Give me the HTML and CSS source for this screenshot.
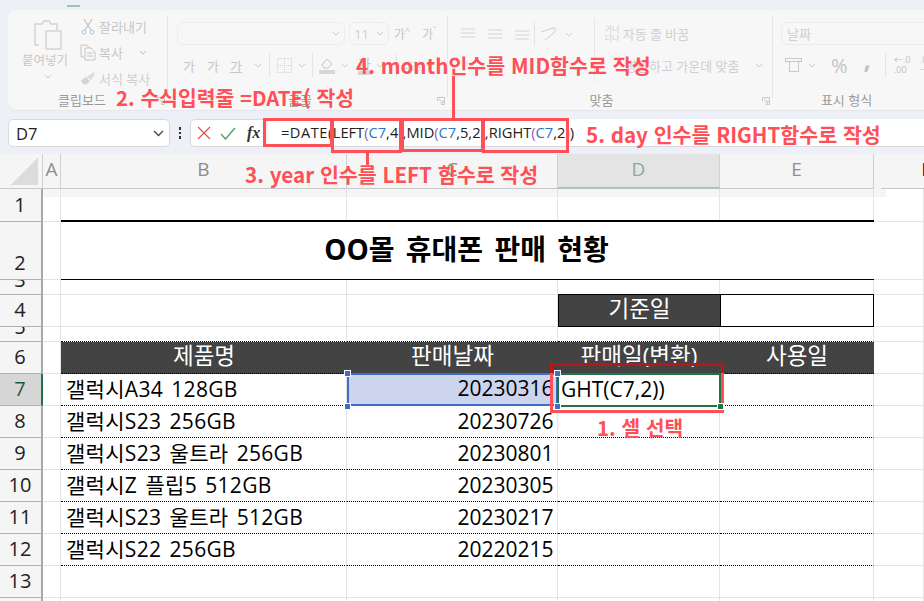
FILE: index.html
```html
<!DOCTYPE html>
<html lang="ko">
<head>
<meta charset="utf-8">
<title>OO몰 휴대폰 판매 현황</title>
<link rel="stylesheet" href="styles.css">
</head>
<body>
<div class="app">
  <nav class="tabs">
    <span class="tab t1">파일</span>
    <span class="tab t2 on">홈</span>
    <span class="tab t3">삽입</span>
    <span class="tab t4">페이지 레이아웃</span>
    <span class="tab t5">수식</span>
    <span class="tab t6">데이터</span>
    <span class="tab t7">검토</span>
    <span class="tab t8">보기</span>
    <span class="tab t9">개발 도구</span>
    <span class="tab t10">추가</span>
    <span class="tab t11">도움말</span>
  </nav>

  <section class="ribbon">
    <div class="group g-clip">
      <div class="clip-body">
        <div class="paste">
          <svg width="30" height="30" viewBox="0 0 30 30" fill="none" stroke="#d2d2d2" stroke-width="1.4"><path d="M6 25H2V4h7l2-3h5l2 3h6v6"/><rect x="13" y="11" width="15" height="18" fill="#f7f7f7"/></svg>
          <span class="faint">붙여넣기</span>
          <svg class="chev" width="8" height="5" viewBox="0 0 8 5"><path d="M1 1l3 3 3-3" fill="none" stroke="#c8c8c8"/></svg>
        </div>
        <div class="clip-list">
          <div class="clip-item"><svg width="16" height="17" viewBox="0 0 16 17" fill="none"><path d="M4 1l7 11M12 1L5 12" stroke="#c4c4c4" stroke-width="1.3"/><circle cx="4" cy="14" r="2" stroke="#a9c8e4"/><circle cx="12" cy="14" r="2" stroke="#a9c8e4"/></svg><span class="faint">잘라내기</span></div>
          <div class="clip-item"><svg width="16" height="17" viewBox="0 0 16 17" fill="none" stroke="#c4c4c4"><path d="M4 13H1V1h6l2 3"/><path d="M5 4h6l4 4v8H5zM7 9h6M7 12h6"/></svg><span class="faint">복사</span><svg class="chev2" width="8" height="5" viewBox="0 0 8 5"><path d="M1 1l3 3 3-3" fill="none" stroke="#b8b8b8"/></svg></div>
          <div class="clip-item"><svg width="16" height="15" viewBox="0 0 18 16"><path d="M1 10l6-4 4 5-4 4-2-1-1 1z" fill="#d4d4d4"/><path d="M8 6l7-5 2 2-5 7z" fill="#dcdcdc"/></svg><span class="fainter">서식 복사</span></div>
        </div>
      </div>
      <div class="glabel l-clip">클립보드</div>
      <svg class="launch" width="8" height="8" viewBox="0 0 8 8" fill="none" stroke="#c8c8c8"><path d="M.5 4V.5H7.500V7.500H4M2 2l4 4M6 3.500V6H3.500"/></svg>
    </div>

    <div class="group g-font">
      <div class="rrow">
        <div class="select font-name"><svg width="8" height="5" viewBox="0 0 8 5"><path d="M1 1l3 3 3-3" fill="none" stroke="#c8c8c8"/></svg></div>
        <div class="select font-size"><span class="fainter">11</span><svg width="8" height="5" viewBox="0 0 8 5"><path d="M1 1l3 3 3-3" fill="none" stroke="#c8c8c8"/></svg></div>
        <span class="faint grow1">가<sup>^</sup></span>
        <span class="faint grow2">가<sup>ˇ</sup></span>
      </div>
      <div class="rrow row2">
        <span class="faint f-b">가</span>
        <span class="faint f-i">가</span>
        <span class="faint f-u">가</span>
        <svg class="chev3" width="8" height="5" viewBox="0 0 8 5"><path d="M1 1l3 3 3-3" fill="none" stroke="#d0d0d0"/></svg>
        <i class="vsep"></i>
        <svg class="borders" width="15" height="15" viewBox="0 0 15 15" fill="none" stroke="#cfcfcf" stroke-dasharray="1 1"><rect x=".5" y=".5" width="14" height="14"/><path d="M7.500 1v13M1 7.500h13"/></svg>
        <svg class="chev4" width="8" height="5" viewBox="0 0 8 5"><path d="M1 1l3 3 3-3" fill="none" stroke="#d0d0d0"/></svg>
        <i class="vsep"></i>
        <svg class="fill" width="16" height="17" viewBox="0 0 16 17" fill="none"><path d="M3 8l5-6 5 5-4 4H5z" stroke="#c4c4c4"/><rect y="13" width="16" height="4" fill="#d6d6d6"/></svg>
        <svg class="chev5" width="8" height="5" viewBox="0 0 8 5"><path d="M1 1l3 3 3-3" fill="none" stroke="#d0d0d0"/></svg>
        <span class="fcolor faint">가</span>
        <svg class="chev6" width="8" height="5" viewBox="0 0 8 5"><path d="M1 1l3 3 3-3" fill="none" stroke="#d0d0d0"/></svg>
        <i class="vsep"></i>
        <span class="fainter fext">내천</span>
        <svg class="chev8" width="8" height="5" viewBox="0 0 8 5"><path d="M1 1l3 3 3-3" fill="none" stroke="#c8c8c8"/></svg>
      </div>
      <div class="glabel l-font">글꼴</div>
      <svg class="launch" width="8" height="8" viewBox="0 0 8 8" fill="none" stroke="#c8c8c8"><path d="M.5 4V.5H7.500V7.500H4M2 2l4 4M6 3.500V6H3.500"/></svg>
    </div>

    <div class="group g-align">
      <div class="align-body">
        <div class="align-left">
          <div class="rrow aicons">
            <svg width="14" height="12" viewBox="0 0 14 12" stroke="#d4d4d4"><path d="M0 1h14M0 5h14M0 9h14"/></svg>
            <svg width="14" height="12" viewBox="0 0 14 12" stroke="#d4d4d4"><path d="M0 2h14M0 6h14M0 10h14"/></svg>
            <svg width="14" height="12" viewBox="0 0 14 12" stroke="#d4d4d4"><path d="M0 3h14M0 7h14M0 11h14"/></svg>
            <i class="vsep"></i>
            <svg width="18" height="14" viewBox="0 0 18 14" fill="none" stroke="#d0d0d0"><path d="M1 5l12-4M5 13l10-8M11 1h4v4"/></svg>
            <svg class="chev7" width="8" height="5" viewBox="0 0 8 5"><path d="M1 1l3 3 3-3" fill="none" stroke="#d0d0d0"/></svg>
          </div>
        </div>
        <div class="align-right">
          <div class="rrow wrap"><span class="stack fainter">가나<br>다나</span><span class="fainter">자동 줄 바꿈</span></div>
          <div class="rrow merge"><span class="fainter">병합하고 가운데 맞춤</span><svg width="8" height="5" viewBox="0 0 8 5"><path d="M1 1l3 3 3-3" fill="none" stroke="#c8c8c8"/></svg></div>
        </div>
      </div>
      <div class="glabel l-align">맞춤</div>
      <svg class="launch" width="8" height="8" viewBox="0 0 8 8" fill="none" stroke="#c8c8c8"><path d="M.5 4V.5H7.500V7.500H4M2 2l4 4M6 3.500V6H3.500"/></svg>
    </div>

    <div class="group g-num">
      <div class="select num-fmt"><span class="fainter">날짜</span></div>
      <div class="rrow num-row">
        <svg width="17" height="14" viewBox="0 0 17 14" fill="none" stroke="#c8c8c8"><rect x=".5" y=".5" width="16" height="3"/><rect x="4.500" y="3.500" width="9" height="10"/></svg>
        <svg width="8" height="5" viewBox="0 0 8 5"><path d="M1 1l3 3 3-3" fill="none" stroke="#c8c8c8"/></svg>
        <span class="pct">%</span>
        <span class="cma">,</span>
        <i class="vsep"></i>
        <span class="dec">←.0<br>.00</span>
        <span class="dec">.00<br>→.0</span>
      </div>
      <div class="glabel l-num">표시 형식</div>
    </div>
  </section>

  <section class="fbar">
    <div class="namebox"><span>D7</span><svg width="11" height="7" viewBox="0 0 11 7"><path d="M1 1l4.500 4.500L10 1" fill="none" stroke="#444" stroke-width="1.3"/></svg></div>
    <div class="dots"><i></i><i></i><i></i></div>
    <div class="fbtns">
      <svg width="14" height="14" viewBox="0 0 14 14"><path d="M1 1l12 12M13 1L1 13" stroke="#e2504a" stroke-width="1.2"/></svg>
      <svg width="16" height="13" viewBox="0 0 16 13"><path d="M1 7l4.500 5L15 1" fill="none" stroke="#3f9e5f" stroke-width="1.2"/></svg>
      <span class="fx">fx</span>
    </div>
    <div class="finput"><span class="k"><span class="kd">=DATE(</span>LEFT<b class="p">(</b><b class="r">C7</b>,4<b class="p">)</b>,MID<b class="p">(</b><b class="r">C7</b>,5,2<b class="p">)</b>,RIGHT<b class="p">(</b><b class="r">C7</b>,2<b class="p">)</b>)</span></div>
  </section>

  <section class="sheet">
    <div class="row r-head">
      <div class="corner"><i></i></div>
      <div class="ch">A</div><div class="ch">B</div><div class="ch">C</div><div class="ch sel">D</div><div class="ch">E</div><div class="ch last">F</div>
    </div>
    <div class="row h33 strip"><div class="rh">1</div><div class="c"></div><div class="c"></div><div class="c"></div><div class="c"></div><div class="c"></div><div class="c"></div></div>
    <div class="row h58"><div class="rh">2</div><div class="c"></div><div class="title">OO몰 휴대폰 판매 현황</div><div class="c"></div></div>
    <div class="row h15"><div class="rh">3</div><div class="c"></div><div class="c"></div><div class="c"></div><div class="c"></div><div class="c"></div><div class="c"></div></div>
    <div class="row h32"><div class="rh">4</div><div class="c"></div><div class="c"></div><div class="c"></div><div class="base-k">기준일</div><div class="base-v"></div><div class="c"></div></div>
    <div class="row h15"><div class="rh">5</div><div class="c"></div><div class="c dot"></div><div class="c dot"></div><div class="c dot"></div><div class="c dot"></div><div class="c"></div></div>
    <div class="row h32"><div class="rh">6</div><div class="c"></div><div class="th">제품명</div><div class="th">판매날짜</div><div class="th">판매일(변환)</div><div class="th">사용일</div><div class="c"></div></div>
    <div class="row h32"><div class="rh sel">7</div><div class="c"></div><div class="td">갤럭시A34 128GB</div><div class="td num csel">20230316</div><div class="td dsel">GHT(C7,2))</div><div class="td"></div><div class="c"></div></div>
    <div class="row h32"><div class="rh">8</div><div class="c"></div><div class="td">갤럭시S23 256GB</div><div class="td num">20230726</div><div class="td"></div><div class="td"></div><div class="c"></div></div>
    <div class="row h32"><div class="rh">9</div><div class="c"></div><div class="td">갤럭시S23 울트라 256GB</div><div class="td num">20230801</div><div class="td"></div><div class="td"></div><div class="c"></div></div>
    <div class="row h32"><div class="rh">10</div><div class="c"></div><div class="td">갤럭시Z 플립5 512GB</div><div class="td num">20230305</div><div class="td"></div><div class="td"></div><div class="c"></div></div>
    <div class="row h32"><div class="rh">11</div><div class="c"></div><div class="td">갤럭시S23 울트라 512GB</div><div class="td num">20230217</div><div class="td"></div><div class="td"></div><div class="c"></div></div>
    <div class="row h32"><div class="rh">12</div><div class="c"></div><div class="td">갤럭시S22 256GB</div><div class="td num">20220215</div><div class="td"></div><div class="td"></div><div class="c"></div></div>
    <div class="row h32"><div class="rh">13</div><div class="c"></div><div class="c"></div><div class="c"></div><div class="c"></div><div class="c"></div><div class="c"></div></div>
    <div class="row h32"><div class="rh">14</div><div class="c"></div><div class="c"></div><div class="c"></div><div class="c"></div><div class="c"></div><div class="c"></div></div>
  </section>

  <!-- screenshot annotations layered over the window -->
  <div class="note n2">2. 수식입력줄 =DATE( 작성</div>
  <div class="note n4">4. month인수를 MID함수로 작성</div>
  <div class="note n5">5. day 인수를 RIGHT함수로 작성</div>
  <div class="note n3">3. year 인수를 LEFT 함수로 작성</div>
  <div class="note n1">1. 셀 선택</div>
  <i class="box b-date"></i><i class="box b-left"></i><i class="box b-mid"></i><i class="box b-right"></i>
  <i class="link l4"></i><i class="link l3"></i>
  <i class="box-cell"></i>
  <i class="hnd h1"></i><i class="hnd h2"></i><i class="hnd h3"></i><i class="hnd h4"></i><i class="hnd h5"></i>
</div>
</body>
</html>
```
FILE: styles.css
```css
* { box-sizing: border-box; }
html, body { margin: 0; height: 100%; overflow: hidden; }
body { background: #eef0f7; font-family: "Open Sans", "Noto Sans CJK KR", sans-serif; }
.app { position: relative; width: 924px; height: 601px; overflow: hidden; }

.tabs { height: 10px; position: relative; font-size: 14px; color: #222; }
.tab { position: absolute; top: -19px; line-height: 20px; white-space: nowrap; }
.tab.on::after { content: ""; position: absolute; left: 0; right: 0; top: 24px; height: 2px; background: #9fc4b0; }
.t1 { left: 27px; } .t2 { left: 67px; } .t3 { left: 101px; } .t4 { left: 153px; }
.t5 { left: 266px; } .t6 { left: 312px; } .t7 { left: 362px; } .t8 { left: 420px; }
.t9 { left: 462px; } .t10 { left: 504px; } .t11 { left: 544px; }

.ribbon { margin-left: 8px; height: 100px; background: #f7f7f7; border-radius: 8px 0 0 8px; display: flex; font-size: 13px; color: #c4c4c4; box-shadow: 0 1px 0 #e6e6ea; }
.group { position: relative; flex: none; height: 100px; }
.group::after { content: ""; position: absolute; right: 0; top: 5px; bottom: 12px; width: 1px; background: #e6e6e6; }
.g-clip { width: 160px; }
.g-font { width: 280px; padding: 12px 0 0 9px; }
.g-align { width: 325px; }
.g-num { width: 151px; padding: 12px 0 0 8px; }
.g-num::after { display: none; }
.glabel { position: absolute; left: 0; right: 0; top: 81px; text-align: center; font-size: 13px; color: #9a9a9a; line-height: 18px; }
.l-clip { padding-right: 12px; }
.l-font { padding-right: 16px; }
.l-align { padding-right: 18px; }
.l-num { padding-right: 4px; }
.launch { position: absolute; right: 3px; top: 87px; }
.faint { color: #c6c6c6; }
.fainter { color: #cfcfcf; }
.rrow { display: flex; align-items: center; }
.rrow > * { flex: none; }
.vsep { display: block; width: 1px; height: 24px; background: #e4e4e4; }

.clip-body { display: flex; padding: 10px 0 0 8px; }
.paste { width: 64px; display: flex; flex-direction: column; align-items: center; }
.paste .faint { font-size: 12.500px; line-height: 16px; margin: 3px 6px 0 0; white-space: nowrap; }
.chev { margin-top: 5px; }
.clip-list { display: flex; flex-direction: column; gap: 7px; margin-top: -3px; }
.clip-item { display: flex; align-items: center; gap: 3px; height: 19px; white-space: nowrap; }
.chev2 { margin-left: 13px; }

.select { height: 23px; border: 1px solid #ededed; border-radius: 6px; display: flex; align-items: center; justify-content: flex-end; padding: 0 4px; gap: 7px; flex: none; }
.font-name { width: 168px; }
.font-size { width: 40px; margin-left: 4px; }
.grow1 { margin-left: 5px; width: 28px; font-size: 12px; }
.grow2 { font-size: 12px; }
sup { font-size: 9px; line-height: 0; }
.row2 { margin-top: 8px; height: 24px; white-space: nowrap; }
.f-b { margin-left: 6px; }
.f-i { margin-left: 12px; }
.f-u { margin-left: 11px; text-decoration: underline; }
.chev3 { margin: 0 7px 0 12px; }
.borders { margin-left: 7px; }
.chev4 { margin: 0 6px 0 6px; }
.fill { margin-left: 6px; }
.chev5 { margin-left: 6px; }
.fcolor { margin-left: 9px; font-size: 14px; border-bottom: 4px solid #d6d6d6; line-height: 15px; }
.chev6 { margin: 0 12px 0 5px; }
.fext { font-size: 10px; margin-left: 6px; }
.chev8 { margin-left: 5px; }

.align-body { display: flex; }
.align-left { width: 147px; padding: 4px 0 0 13px; margin-top: 8px; height: 64px; border-right: 1px solid #e6e6e6; }
.aicons { gap: 13px; }
.aicons .vsep { margin: 0 -8px; }
.aicons .chev7 { margin-left: -6px; }
.align-right { padding: 10px 0 0 10px; }
.wrap { gap: 3px; height: 26px; white-space: nowrap; }
.stack { font-size: 8px; line-height: 9px; }
.merge { margin: 10px 0 0 20px; gap: 16px; white-space: nowrap; }

.num-fmt { width: 160px; justify-content: flex-start; padding: 0 5px; }
.num-row { margin-top: 8px; height: 24px; padding-left: 4px; gap: 6px; }
.pct { font-size: 20px; color: #c4c4c4; margin-left: 9px; }
.cma { font-size: 26px; font-weight: 700; color: #c4c4c4; margin: -12px 8px 0 10px; }
.dec { font-size: 9px; line-height: 10px; color: #c0c0c0; width: 18px; margin-left: 2px; }

.fbar { display: flex; align-items: center; margin: 9px 0 0 8px; height: 28px; }
.namebox { width: 162px; height: 28px; background: #fff; border: 1px solid #d8d8de; border-radius: 5px; display: flex; align-items: center; justify-content: space-between; padding: 0 5px 0 7px; font-size: 16.500px; color: #222; }
.dots { width: 20px; display: flex; flex-direction: column; align-items: center; gap: 2px; }
.dots i { width: 2.500px; height: 2.500px; background: #333; }
.fbtns { width: 74px; height: 28px; background: #fff; border: 1px solid #d8d8de; border-radius: 5px 0 0 5px; display: flex; align-items: center; padding: 0 0 0 6px; gap: 9px; }
.fx { font-family: "Liberation Serif", serif; font-style: italic; font-weight: 700; font-size: 16px; color: #333; margin-left: 2px; }
.finput { flex: 1; height: 28px; margin-left: 4px; background: #fff; border-bottom: 1px solid #d8d8de; padding-left: 13px; font-size: 14.650px; line-height: 27px; white-space: nowrap; }
.k { color: #222; }
.kd { letter-spacing: .5px; }
.k b { font-weight: 400; }
.p { color: #8e5bb5; }
.r { color: #2f75c7; }

.sheet { margin-top: 7px; }
.row { display: grid; grid-template-columns: 43px 18px 286px 211px 162px 154px 50px; grid-template-rows: minmax(0, 1fr); background: #fff; }
.h15 { height: 15px; } .h32 { height: 32px; } .h33 { height: 33px; } .h58 { height: 58px; }
.c { border-right: 1px solid #e4e4e4; border-bottom: 1px solid #e4e4e4; }
.c.dot { border-bottom: 1px dotted #000; }
.strip { background: linear-gradient(#f5f5f5 8px, #fff 8px); }
.strip .c:last-child { background: linear-gradient(90deg, #f5f5f5 12px, #fff 12px) top / 100% 8px no-repeat; }

.r-head { height: 35px; background: #f5f5f5; }
.corner { display: flex; align-items: flex-end; justify-content: flex-end; padding: 0 4px 3px 0; border-right: 1px solid #d0d0d0; border-bottom: 1px solid #c8c8c8; }
.corner i { width: 27px; height: 27px; background: linear-gradient(to bottom right, transparent 50%, #dcdcdc 50%); }
.ch { display: flex; align-items: center; justify-content: center; font-size: 19px; color: #8d8d8d; border-right: 1px solid #d0d0d0; border-bottom: 1px solid #c8c8c8; padding-bottom: 4px; }
.ch.sel { background: #e4e4e4; color: #8fa89a; border-bottom: 2px solid #a9c7b3; }
.ch.last { justify-content: flex-end; color: #222; border-right: 0; position: relative; left: 7px; }

.rh { background: #f5f5f5; border-right: 2px solid #a8a8a8; border-bottom: 1px solid #b0b0b0; font-size: 20px; color: #222; display: flex; align-items: flex-end; justify-content: center; line-height: 32px; overflow: hidden; padding-right: 1px; }
.h15 .rh { align-items: flex-start; line-height: 0; }
.rh.sel { background: #d6d6d6; border-right-color: #217346; color: #1f5a3d; }
.strip .rh { background: #f5f5f5; align-items: center; }

.title { grid-column: 3 / span 4; display: flex; align-items: center; justify-content: center; font-size: 28px; line-height: 1; word-spacing: 4px; font-weight: 700; color: #000; border-top: 2px solid #000; border-bottom: 1px solid #000; margin-top: -2px; padding: 0 2px 4px 0; }
.base-k { background: #434343; color: #fff; font-size: 22.500px; line-height: 1; display: flex; align-items: center; justify-content: center; border: 1px solid #000; border-right: 0; margin-top: -1px; padding-bottom: 3px; }
.base-v { border: 1px solid #000; margin-top: -1px; }
.th { background: #434343; color: #fff; font-size: 22.500px; line-height: 1; display: flex; align-items: center; justify-content: center; padding-bottom: 3px; overflow: hidden; white-space: nowrap; border-bottom: 1px dotted #000; }
.td { font-size: 21px; line-height: 31px; color: #000; padding-left: 5px; border-right: 1px solid #e4e4e4; border-bottom: 1px dotted #000; white-space: nowrap; overflow: hidden; letter-spacing: .3px; word-spacing: 2.500px; }
.num { text-align: right; padding: 0 3.500px 0 0; letter-spacing: 0; }
.csel { background: #cdd5ee; box-shadow: inset 0 0 0 1px #fff; outline: 2px solid #3d6fc4; outline-offset: -2px; margin-top: -1px; }
.dsel { outline: 2px solid #217346; outline-offset: -1px; padding-left: 3px; letter-spacing: 0; }

.note { position: absolute; color: #ff4f57; font-family: "Noto Sans CJK KR", sans-serif; font-weight: 700; font-size: 20.600px; line-height: 28px; white-space: nowrap; }
.n2 { left: 116px; top: 83px; font-size: 20.400px; }
.n4 { left: 356px; top: 51px; }
.n5 { left: 586px; top: 120px; }
.n3 { left: 245px; top: 160px; }
.n1 { left: 597px; top: 413px; font-size: 20.400px; }
.box { position: absolute; border: 3px solid #ff4f57; top: 118px; }
.b-date { left: 263px; width: 70px; height: 29px; }
.b-left { left: 331px; width: 71px; height: 35px; }
.b-mid { left: 401px; width: 83px; height: 34px; }
.b-right { left: 482px; width: 87px; height: 35px; }
.link { position: absolute; background: #ff4f57; width: 3px; }
.l4 { left: 452px; top: 76px; height: 42px; }
.l3 { left: 366px; top: 153px; height: 12px; }
.box-cell { position: absolute; left: 550px; top: 363px; width: 174px; height: 50px; border: 3px solid; border-image: linear-gradient(#bb1616 0 10px, #ff4f57 10px) 3; }
.hnd { position: absolute; width: 5px; height: 5px; background: #3d6fc4; border: 1px solid #fff; box-sizing: content-box; }
.h1 { left: 344px; top: 370px; } .h2 { left: 344px; top: 403px; }
.h3 { left: 554px; top: 370px; } .h4 { left: 554px; top: 403px; }
.h5 { left: 717px; top: 403px; background: #217346; }
```
